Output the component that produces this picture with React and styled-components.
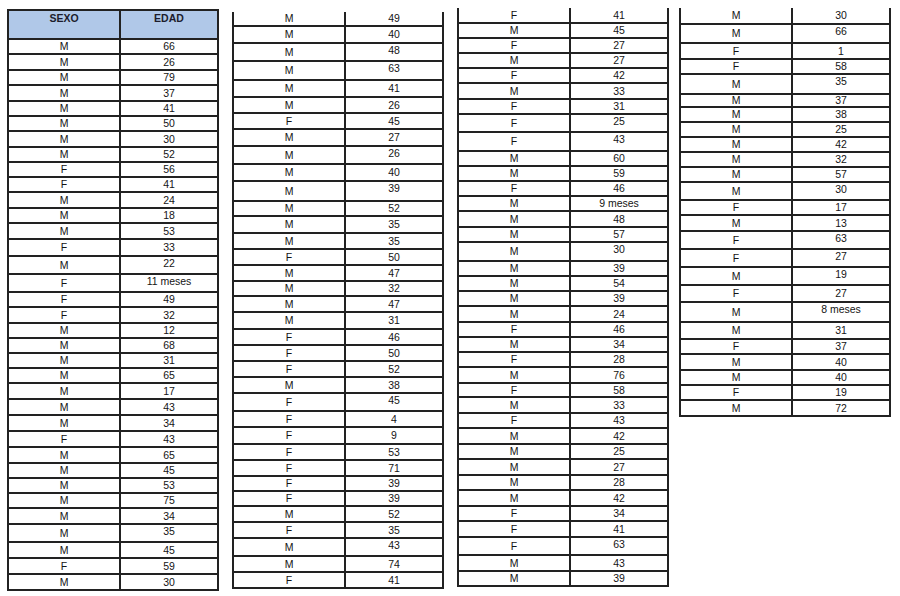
import React from "react";
import styled, { createGlobalStyle } from "styled-components";

const Global = createGlobalStyle`
  html, body { margin: 0; padding: 0; background: #ffffff; }
  body { font-family: "Liberation Sans", Arial, sans-serif; }
`;

const Page = styled.div`
  width: 900px;
  height: 596px;
  display: flex;
  align-items: flex-start;
  padding-left: 7px;
  box-sizing: border-box;
  overflow: hidden;
  background: #fff;
`;

const Table = styled.div`
  display: flex;
  flex-direction: column;
  width: 212px;
  margin-top: ${(p) => p.$top}px;
  margin-left: ${(p) => p.$left}px;
  border-left: 2px solid #222;
  box-sizing: border-box;
`;

const Row = styled.div`
  display: grid;
  grid-template-columns: 112px 98px;
  height: ${(p) => p.$h}px;
`;

const HeaderRow = styled(Row)`
  background: #b0c8e8;
  border-top: 2px solid #222;
`;

const Cell = styled.div`
  box-sizing: border-box;
  border-right: 2px solid #222;
  border-bottom: 2px solid #222;
  display: flex;
  justify-content: center;
  align-items: ${(p) => (p.$top ? "flex-start" : "center")};
  padding-top: ${(p) => (p.$top ? 1 : 0)}px;
  font-size: 10.5px;
  line-height: 1;
  color: #141414;
  white-space: nowrap;
  -webkit-font-smoothing: antialiased;
`;

const HeadCell = styled(Cell)`
  align-items: flex-start;
  padding-top: 2px;
  font-weight: bold;
  color: #1c1c2c;
`;

const t1 = {
  top: 9,
  left: 0,
  header: 29,
  bounds: [38,53,69,84,100,115,130,146,161,176,191,207,222,238,255,273,291,306,322,337,352,367,382,398,414,430,446,462,477,492,507,523,541,557,573,589],
  sex: "M M M M M M M M F F M M M F M F F F M M M M M M M F M M M M M M M F M",
  age: ["66","26","79","37","41","50","30","52","56","41","24","18","53","33","22","11 meses","49","32","12","68","31","65","17","43","34","43","65","45","53","75","34","35","45","59","30"],
};

const t2 = {
  top: 12,
  left: 13,
  bounds: [12,27,44,62,81,98,114,130,147,165,182,202,217,234,250,266,282,297,313,330,346,362,378,394,412,428,445,461,477,492,507,523,539,557,573,589],
  sex: "M M M M M M F M M M M M M M F M M M M F F F M F F F F F F F M F M M F",
  age: ["49","40","48","63","41","26","45","27","26","40","39","52","35","35","50","47","32","47","31","46","50","52","38","45","4","9","53","71","39","39","52","35","43","74","41"],
};

const t3 = {
  top: 8,
  left: 13,
  bounds: [8,24,39,54,69,84,100,115,133,152,167,182,197,212,228,243,262,277,292,307,323,338,353,368,384,398,414,429,445,460,476,491,507,522,538,556,572,587],
  sex: "F M F M F M F F F M M F M M M M M M M M F M F M F M F M M M M M F F F M M",
  age: ["41","45","27","27","42","33","31","25","43","60","59","46","9 meses","48","57","30","39","54","39","24","46","34","28","76","58","33","43","42","25","27","28","42","34","41","63","43","39"],
};

const t4 = {
  top: 8,
  left: 10,
  bounds: [8,25,44,60,75,95,107,123,138,153,168,183,201,216,232,250,268,286,303,323,340,355,371,386,401,417],
  sex: "M M F F M M M M M M M M F M F F M F M M F M M F M",
  age: ["30","66","1","58","35","37","38","25","42","32","57","30","17","13","63","27","19","27","8 meses","31","37","40","40","19","72"],
};

function DataTable({ data }) {
  const sex = data.sex.split(" ");
  return (
    <Table $top={data.top} $left={data.left}>
      {data.header && (
        <HeaderRow $h={data.header}>
          <HeadCell>SEXO</HeadCell>
          <HeadCell>EDAD</HeadCell>
        </HeaderRow>
      )}
      {data.age.map((a, i) => {
        const h = data.bounds[i + 1] - data.bounds[i];
        return (
          <Row key={i} $h={h}>
            <Cell>{sex[i]}</Cell>
            <Cell $top={h >= 18}>{a}</Cell>
          </Row>
        );
      })}
    </Table>
  );
}

export default function App() {
  return (
    <>
      <Global />
      <Page>
        <DataTable data={t1} />
        <DataTable data={t2} />
        <DataTable data={t3} />
        <DataTable data={t4} />
      </Page>
    </>
  );
}
